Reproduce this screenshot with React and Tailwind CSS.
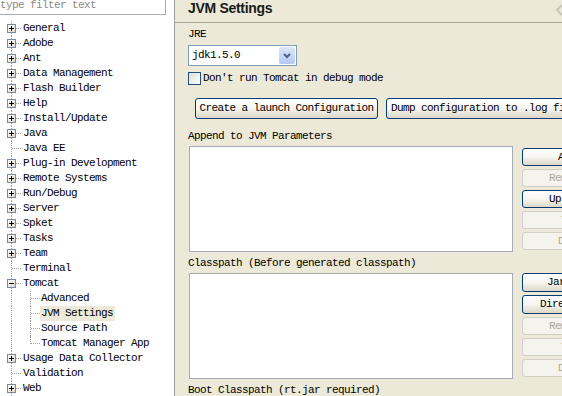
import React from 'react';

const mono = "font-['Liberation_Mono','DejaVu_Sans_Mono',monospace] text-[11px] tracking-[-0.6px] leading-[15px]";

const Expander = ({ open }) => (
  <span className="relative z-10 flex h-[9px] w-[9px] items-center justify-center border border-[#7a8a99] bg-gradient-to-br from-white to-[#d8d8cc]">
    <span className="absolute h-px w-[5px] bg-black" />
    {!open && <span className="absolute h-[5px] w-px bg-black" />}
  </span>
);

const treeItems = [
  { label: 'General', kids: true },
  { label: 'Adobe', kids: true },
  { label: 'Ant', kids: true },
  { label: 'Data Management', kids: true },
  { label: 'Flash Builder', kids: true },
  { label: 'Help', kids: true },
  { label: 'Install/Update', kids: true },
  { label: 'Java', kids: true },
  { label: 'Java EE' },
  { label: 'Plug-in Development', kids: true },
  { label: 'Remote Systems', kids: true },
  { label: 'Run/Debug', kids: true },
  { label: 'Server', kids: true },
  { label: 'Spket', kids: true },
  { label: 'Tasks', kids: true },
  { label: 'Team', kids: true },
  { label: 'Terminal' },
  { label: 'Tomcat', kids: true, open: true },
  { label: 'Advanced', child: true },
  { label: 'JVM Settings', child: true, selected: true },
  { label: 'Source Path', child: true },
  { label: 'Tomcat Manager App', child: true, last: true },
  { label: 'Usage Data Collector', kids: true },
  { label: 'Validation' },
  { label: 'Web', kids: true },
];

const TreeRow = ({ item }) => (
  <div className="flex h-[15px] items-center">
    <div className="relative flex h-full w-[22px] shrink-0 items-center justify-center">
      <span className="absolute left-[11px] top-0 h-full border-l border-dotted border-[#a0a0a0]" />
      {!item.child && <span className="absolute left-[12px] top-[7px] w-[9px] border-t border-dotted border-[#a0a0a0]" />}
      {item.kids && <Expander open={item.open} />}
    </div>
    {item.child && (
      <div className="relative h-full w-[18px] shrink-0">
        <span className={`absolute left-[8px] top-0 border-l border-dotted border-[#a0a0a0] ${item.last ? 'h-[8px]' : 'h-full'}`} />
        <span className="absolute left-[9px] top-[7px] w-[9px] border-t border-dotted border-[#a0a0a0]" />
      </div>
    )}
    <span className={`${item.selected ? 'bg-[#ece9d8]' : ''} whitespace-nowrap pl-px pr-[2px] text-black`}>{item.label}</span>
  </div>
);

const XpButton = ({ children, disabled, className = '' }) => (
  <div
    className={`flex shrink-0 items-center whitespace-nowrap rounded-[3px] border ${
      disabled
        ? 'border-[#d2d0c4] bg-[#f4f3ee] text-[#aca899]'
        : 'border-[#003c74] bg-gradient-to-b from-white via-[#f6f5f0] to-[#dcd8c8] text-black'
    } ${className}`}
  >
    {children}
  </div>
);

const SideButtons = ({ items }) => (
  <div className="flex w-[90px] shrink-0 flex-col gap-[3px]">
    {items.map((b, i) => (
      <XpButton key={i} disabled={b.disabled} className={`h-[18px] w-[90px] ${b.pad}`}>
        {b.label}
      </XpButton>
    ))}
  </div>
);

export default function App() {
  return (
    <div className={`flex h-[396px] w-[562px] overflow-hidden bg-[#ece9d8] ${mono}`}>
      {/* preference tree */}
      <div className="flex w-[175px] shrink-0 flex-col border-r border-[#a0a0a0] bg-white">
        <div className="h-[15px] w-[166px] overflow-hidden border-r border-b border-[#a5acb5] leading-[11px] text-[#8a8a8a]">
          type filter text
        </div>
        <div className="flex flex-col pt-[6px]">
          {treeItems.map((it) => (
            <TreeRow key={it.label} item={it} />
          ))}
        </div>
      </div>

      {/* settings page */}
      <div className="relative flex min-w-0 flex-1 flex-col overflow-hidden">
        <div className="flex h-[23px] shrink-0 items-start border-b border-[#aca899] pl-[13px] pt-px">
          <span className="font-['Liberation_Sans',Arial,sans-serif] text-[14px] font-bold leading-[15px] tracking-[-0.3px] text-[#1a1a1a]">
            JVM Settings
          </span>
          <svg className="absolute right-[-2px] top-[4px]" width="10" height="12" viewBox="0 0 10 12">
            <path d="M8 1 L3 6 L8 11" stroke="#c8c6bc" strokeWidth="2" fill="none" />
          </svg>
        </div>

        <div className="flex flex-col whitespace-nowrap pl-[13px]">
          <div className="mt-[4px] h-[15px]">JRE</div>
          <div className="mt-[3px] flex h-[21px] w-[109px] items-center border border-[#7f9db9] bg-white pl-[3px]">
            <span className="flex-1">jdk1.5.0</span>
            <span className="mr-px flex h-[17px] w-[16px] items-center justify-center rounded-[2px] bg-gradient-to-b from-[#dce6fb] to-[#b5c8f3]">
              <svg width="8" height="6" viewBox="0 0 8 6">
                <path d="M1 1 L4 4 L7 1" stroke="#4d6185" strokeWidth="2" fill="none" />
              </svg>
            </span>
          </div>
          <div className="mt-[5px] flex h-[15px] items-center gap-[2px]">
            <span className="h-[13px] w-[13px] shrink-0 border border-[#1c5180] bg-gradient-to-br from-[#dcdcd7] to-white" />
            <span>Don't run Tomcat in debug mode</span>
          </div>
          <div className="mt-[12px] flex gap-[8px] pl-[7px]">
            <XpButton className="h-[21px] w-[183px] justify-center">Create a launch Configuration</XpButton>
            <XpButton className="h-[21px] w-[210px] pl-[4px]">Dump configuration to .log file</XpButton>
          </div>

          <div className="mt-[10px] h-[15px]">Append to JVM Parameters</div>
          <div className="mt-[2px] flex gap-[9px] pl-px">
            <div className="h-[106px] w-[324px] shrink-0 border border-[#a5acb5] bg-white" />
            <div className="pt-[2px]">
              <SideButtons
                items={[
                  { label: 'Add', pad: 'pl-[35px]' },
                  { label: 'Remove', pad: 'pl-[26px]', disabled: true },
                  { label: 'Up', pad: 'pl-[26px]' },
                  { label: 'Top', pad: 'pl-[38px]', disabled: true },
                  { label: 'Down', pad: 'pl-[35px]', disabled: true },
                ]}
              />
            </div>
          </div>

          <div className="mt-[4px] h-[15px]">Classpath (Before generated classpath)</div>
          <div className="mt-[2px] flex gap-[9px] pl-px">
            <div className="h-[106px] w-[324px] shrink-0 border border-[#a5acb5] bg-white" />
            <SideButtons
              items={[
                { label: 'Jars...', pad: 'pl-[24px] h-[19px]' },
                { label: 'Directories', pad: 'pl-[17px] h-[19px]' },
                { label: 'Remove', pad: 'pl-[26px]', disabled: true },
                { label: 'Top', pad: 'pl-[38px]', disabled: true },
                { label: 'Down', pad: 'pl-[35px]', disabled: true },
              ]}
            />
          </div>

          <div className="mt-[4px] h-[15px]">Boot Classpath (rt.jar required)</div>
        </div>
      </div>
    </div>
  );
}
